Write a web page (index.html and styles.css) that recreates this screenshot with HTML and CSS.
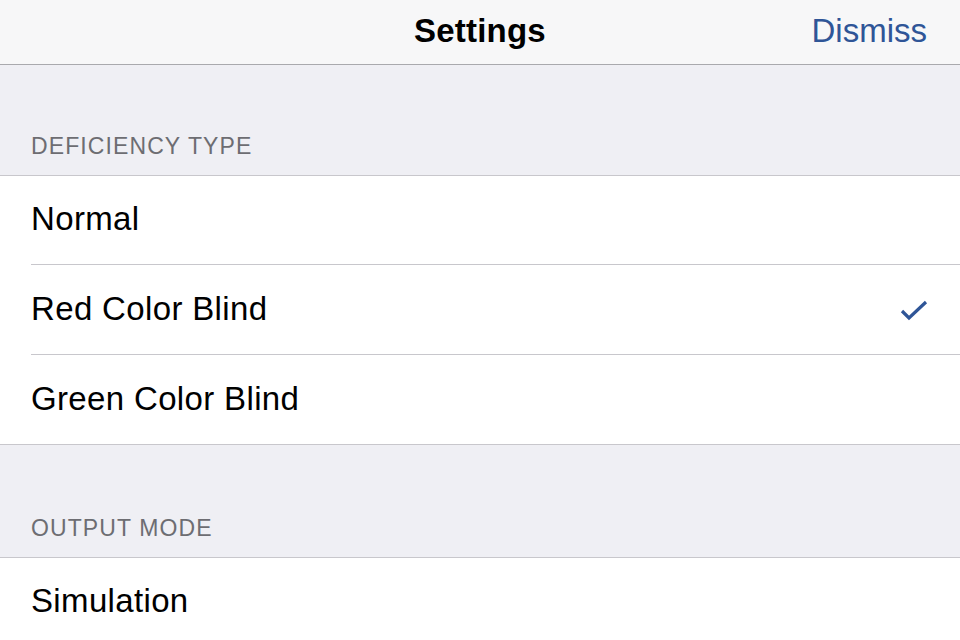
FILE: index.html
```html
<!DOCTYPE html>
<html lang="en">
<head>
<meta charset="utf-8">
<title>Settings</title>
<link rel="stylesheet" href="styles.css">
</head>
<body>
<header class="navbar">
  <span class="nav-spacer"></span>
  <h1 class="nav-title">Settings</h1>
  <a class="nav-action" href="#">Dismiss</a>
</header>
<main class="table">
  <section class="section">
    <h2 class="section-header first">DEFICIENCY TYPE</h2>
    <ul class="group">
      <li class="cell"><span class="cell-label">Normal</span></li>
      <li class="cell"><span class="cell-label">Red Color Blind</span>
        <svg class="check" width="28" height="22" viewBox="0 0 28 22" aria-hidden="true"><path d="M2 12 L9 19 L26 3" fill="none" stroke="#2f5597" stroke-width="3.2" stroke-linecap="butt" stroke-linejoin="miter"/></svg>
      </li>
      <li class="cell"><span class="cell-label">Green Color Blind</span></li>
    </ul>
  </section>
  <section class="section">
    <h2 class="section-header second">OUTPUT MODE</h2>
    <ul class="group">
      <li class="cell"><span class="cell-label">Simulation</span></li>
    </ul>
  </section>
</main>
</body>
</html>
```
FILE: styles.css
```css
html, body {
  margin: 0;
  padding: 0;
}
body {
  background: #efeff4;
  font-family: "Liberation Sans", Arial, sans-serif;
  color: #000;
  width: 960px;
  height: 640px;
  overflow: hidden;
}
.navbar {
  height: 64px;
  background: #f7f7f8;
  border-bottom: 1px solid #a9a9ad;
  display: grid;
  grid-template-columns: 1fr auto 1fr;
  align-items: center;
  padding: 0 33px;
}
.nav-title {
  margin: 0;
  font-size: 33px;
  font-weight: 700;
  letter-spacing: 0.2px;
  line-height: 1;
  padding-bottom: 3px;
}
.nav-action {
  justify-self: end;
  color: #2f5597;
  text-decoration: none;
  font-size: 33px;
  line-height: 1;
  padding-bottom: 3px;
}
.section-header {
  margin: 0;
  height: 111px;
  box-sizing: border-box;
  display: flex;
  align-items: flex-end;
  padding: 0 31px 17px;
  font-size: 23px;
  font-weight: 400;
  line-height: 23px;
  letter-spacing: 1.1px;
  color: #6d6d72;
  border-bottom: 1px solid #c8c7cc;
}
.section-header.second {
  height: 113px;
}
.group {
  list-style: none;
  margin: 0;
  padding: 0;
  background: #fff;
  border-bottom: 1px solid #c8c7cc;
}
.cell {
  margin-left: 31px;
  padding-right: 32px;
  height: 89px;
  display: flex;
  align-items: center;
  justify-content: space-between;
  border-bottom: 1px solid #c8c7cc;
}
.cell:first-child {
  height: 88px;
}
.cell:last-child {
  border-bottom: none;
}
.cell-label {
  font-size: 33px;
  line-height: 1;
  letter-spacing: 0.35px;
  padding-bottom: 3px;
}
.check {
  display: block;
}
```
